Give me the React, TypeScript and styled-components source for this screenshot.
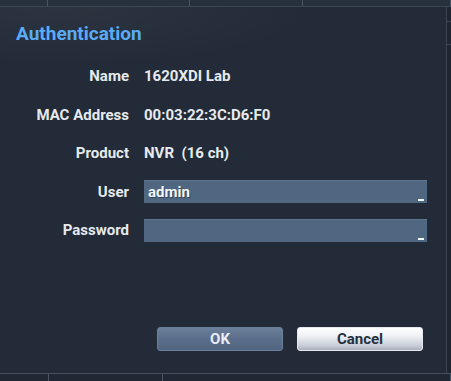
import styled, { createGlobalStyle } from "styled-components";

const GlobalStyle = createGlobalStyle`
  html, body {
    margin: 0;
    padding: 0;
    background: #1c2530;
  }
  body {
    font-family: Roboto, "Liberation Sans", Arial, sans-serif;
  }
`;

const fields = [
  { label: "Name", value: "1620XDI Lab" },
  { label: "MAC Address", value: "00:03:22:3C:D6:F0" },
  { label: "Product", value: "NVR\u00a0\u00a0(16 ch)" },
];

export default function App() {
  return (
    <>
      <GlobalStyle />
      <Page>
        <TopStrip>
          <Cell $w={48} />
          <Cell $w={142} />
          <Cell $w={113} />
          <Cell $w={148} />
        </TopStrip>
        <Middle>
          <Dialog>
            <Title>Authentication</Title>
            <Form>
              {fields.map((f) => (
                <Row key={f.label}>
                  <Label>{f.label}</Label>
                  <Value>{f.value}</Value>
                </Row>
              ))}
              <Row>
                <Label>User</Label>
                <Input>
                  admin
                  <Caret />
                </Input>
              </Row>
              <Row>
                <Label>Password</Label>
                <Input>
                  <Caret />
                </Input>
              </Row>
            </Form>
            <Buttons>
              <Button $primary>OK</Button>
              <Button>Cancel</Button>
            </Buttons>
          </Dialog>
          <SideStrip />
        </Middle>
        <BottomStrip>
          <Cell $w={49} />
          <Cell $w={114} />
          <Cell $w={288} />
        </BottomStrip>
      </Page>
    </>
  );
}

const Page = styled.div`
  width: 451px;
  height: 381px;
  display: flex;
  flex-direction: column;
  overflow: hidden;
  background: #1c2530;
`;

const TopStrip = styled.div`
  height: 6px;
  display: flex;
  background: #27313d;
  border-bottom: 1px solid #3b4654;
`;

const BottomStrip = styled.div`
  height: 7px;
  display: flex;
  background: #1f2833;
  border-top: 1px solid #46505e;
`;

const Cell = styled.div<{ $w: number }>`
  width: ${(p) => p.$w}px;
  flex: none;
  border-right: 1px solid #4a5564;
  box-sizing: border-box;
`;

const Middle = styled.div`
  flex: 1;
  display: flex;
`;

const SideStrip = styled.div`
  flex: 1;
  background: #1e2731;
  border-left: 1px solid #3a4552;
  background-image: linear-gradient(
    to bottom,
    transparent 0 14px,
    #3a4452 14px 15px,
    transparent 15px 37px,
    #3a4452 37px 38px,
    transparent 38px
  );
`;

const Dialog = styled.div`
  width: 446px;
  box-sizing: border-box;
  display: flex;
  flex-direction: column;
  padding: 15px 23px 22px 0;
  background: radial-gradient(
      ellipse 260px 60px at 60px 0,
      rgba(255, 255, 255, 0.045),
      rgba(255, 255, 255, 0) 100%
    ),
    #222b37;
`;

const Title = styled.div`
  padding-left: 16px;
  font-size: 19px;
  line-height: 24px;
  font-weight: 700;
  color: #5aabf7;
`;

const Form = styled.div`
  margin-top: 11px;
  display: flex;
  flex-direction: column;
`;

const Row = styled.div`
  height: 38.5px;
  display: grid;
  grid-template-columns: 129px 283px;
  column-gap: 15px;
  align-items: center;
`;

const Label = styled.div`
  text-align: right;
  font-size: 15px;
  font-weight: 700;
  color: #e6eaee;
`;

const Value = styled.div`
  font-size: 15px;
  font-weight: 700;
  color: #e6eaee;
  white-space: nowrap;
`;

const Input = styled.div`
  position: relative;
  height: 23px;
  box-sizing: border-box;
  padding-left: 4px;
  line-height: 22px;
  font-size: 15px;
  font-weight: 700;
  color: #f4f6f8;
  text-shadow: 1px 1px 0 rgba(0, 0, 0, 0.35);
  background: #4f6780;
  border-top: 1px solid #5d7590;
`;

const Caret = styled.span`
  position: absolute;
  right: 3px;
  bottom: 2px;
  width: 6px;
  height: 2px;
  background: #f2f4f6;
`;

const Buttons = styled.div`
  margin-top: auto;
  display: flex;
  justify-content: flex-end;
  gap: 14px;
`;

const Button = styled.div<{ $primary?: boolean }>`
  width: 126px;
  height: 24px;
  box-sizing: border-box;
  border-radius: 3px;
  display: flex;
  align-items: center;
  justify-content: center;
  font-size: 15px;
  font-weight: 700;
  color: ${(p) => (p.$primary ? "#e8ecf2" : "#26303d")};
  border: 1px solid ${(p) => (p.$primary ? "#6a7f9a" : "#e4e7ee")};
  background: ${(p) =>
    p.$primary
      ? "linear-gradient(to bottom, #6b7f9b 0%, #5a6e8b 50%, #52657f 100%)"
      : "linear-gradient(to bottom, #ffffff 0%, #f1f2f6 35%, #c9cdd8 80%, #aab0be 100%)"};
`;
